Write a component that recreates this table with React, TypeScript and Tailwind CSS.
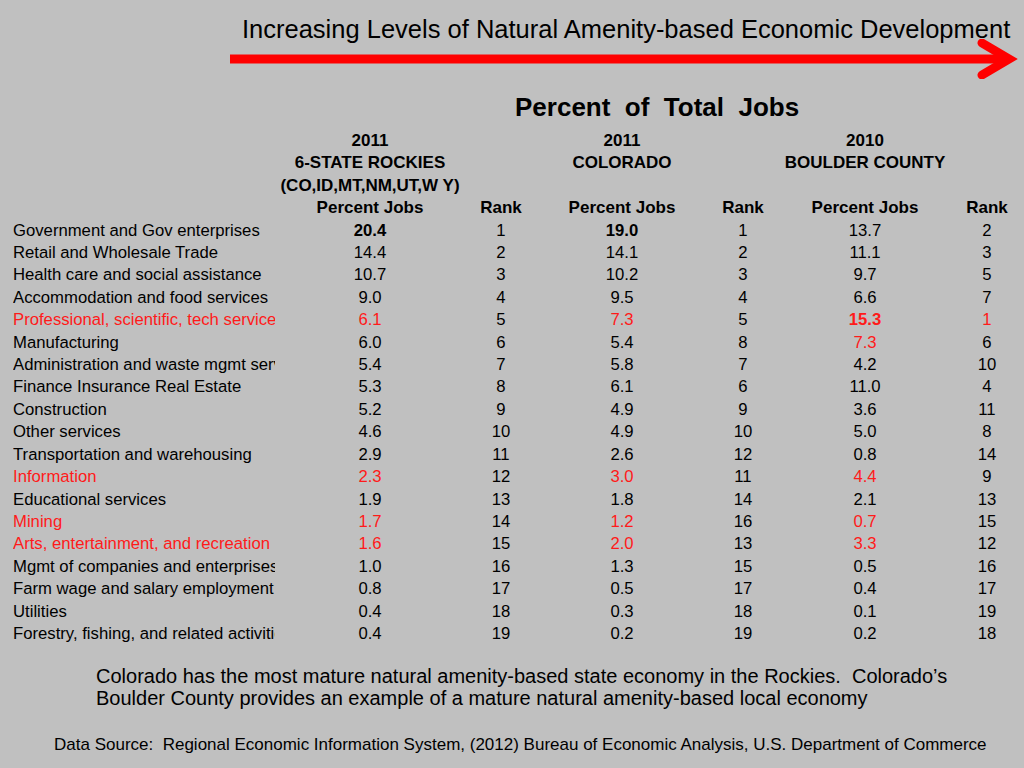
type Row = {
  label: string;
  red?: boolean;
  v: [string, string, string, string, string, string];
  // which cells are red / bold (index 0..5)
  redCells?: number[];
  boldCells?: number[];
};

const rows: Row[] = [
  { label: "Government and Gov enterprises", v: ["20.4", "1", "19.0", "1", "13.7", "2"], boldCells: [0, 2] },
  { label: "Retail and Wholesale Trade", v: ["14.4", "2", "14.1", "2", "11.1", "3"] },
  { label: "Health care and social assistance", v: ["10.7", "3", "10.2", "3", "9.7", "5"] },
  { label: "Accommodation and food services", v: ["9.0", "4", "9.5", "4", "6.6", "7"] },
  { label: "Professional, scientific, tech services", red: true, v: ["6.1", "5", "7.3", "5", "15.3", "1"], redCells: [0, 2, 4, 5], boldCells: [4] },
  { label: "Manufacturing", v: ["6.0", "6", "5.4", "8", "7.3", "6"], redCells: [4] },
  { label: "Administration and waste mgmt services", v: ["5.4", "7", "5.8", "7", "4.2", "10"] },
  { label: "Finance Insurance Real Estate", v: ["5.3", "8", "6.1", "6", "11.0", "4"] },
  { label: "Construction", v: ["5.2", "9", "4.9", "9", "3.6", "11"] },
  { label: "Other services", v: ["4.6", "10", "4.9", "10", "5.0", "8"] },
  { label: "Transportation and warehousing", v: ["2.9", "11", "2.6", "12", "0.8", "14"] },
  { label: "Information", red: true, v: ["2.3", "12", "3.0", "11", "4.4", "9"], redCells: [0, 2, 4] },
  { label: "Educational services", v: ["1.9", "13", "1.8", "14", "2.1", "13"] },
  { label: "Mining", red: true, v: ["1.7", "14", "1.2", "16", "0.7", "15"], redCells: [0, 2, 4] },
  { label: "Arts, entertainment, and recreation", red: true, v: ["1.6", "15", "2.0", "13", "3.3", "12"], redCells: [0, 2, 4] },
  { label: "Mgmt of companies and enterprises", v: ["1.0", "16", "1.3", "15", "0.5", "16"] },
  { label: "Farm wage and salary employment", v: ["0.8", "17", "0.5", "17", "0.4", "17"] },
  { label: "Utilities", v: ["0.4", "18", "0.3", "18", "0.1", "19"] },
  { label: "Forestry, fishing, and related activities", v: ["0.4", "19", "0.2", "19", "0.2", "18"] },
];

const grid = "grid grid-cols-[262px_190px_72px_170px_72px_172px_72px]";

function Arrow() {
  return (
    <svg width="794" height="40" viewBox="0 0 794 40" className="block">
      <line x1="0" y1="20" x2="775" y2="20" stroke="#ff0000" strokeWidth="9" />
      <polyline
        points="752,4 779,20 752,36"
        fill="none"
        stroke="#ff0000"
        strokeWidth="9"
        strokeLinecap="round"
        strokeLinejoin="miter"
      />
    </svg>
  );
}

export default function App() {
  return (
    <div className="w-[1024px] h-[768px] bg-[#c0c0c0] text-black overflow-hidden font-['Liberation_Sans',Arial,sans-serif]">
      {/* header */}
      <div className="pl-[242px] pt-[14px] h-[36px]">
        <span className="text-[25.5px] leading-[30px] whitespace-nowrap">
          Increasing Levels of Natural Amenity-based Economic Development
        </span>
      </div>
      <div className="pl-[230px] pt-[3px]">
        <Arrow />
      </div>

      <div className="pl-[515px] pt-[13px] h-[48px]">
        <span className="text-[26px] leading-[30px] font-bold whitespace-pre">Percent  of  Total  Jobs</span>
      </div>

      {/* table */}
      <div className="pl-[13px] mt-[3px] text-[16.7px]">
        <div className={`${grid} font-bold text-[17px] leading-[22.4px]`}>
          <div />
          <div className="text-center">2011</div>
          <div />
          <div className="text-center">2011</div>
          <div />
          <div className="text-center">2010</div>
          <div />

          <div />
          <div className="text-center">6-STATE ROCKIES</div>
          <div />
          <div className="text-center">COLORADO</div>
          <div />
          <div className="text-center">BOULDER COUNTY</div>
          <div />

          <div />
          <div className="text-center whitespace-pre">(CO,ID,MT,NM,UT,W Y)</div>
          <div />
          <div />
          <div />
          <div />
          <div />

          <div />
          <div className="text-center">Percent Jobs</div>
          <div className="text-center">Rank</div>
          <div className="text-center">Percent Jobs</div>
          <div className="text-center">Rank</div>
          <div className="text-center">Percent Jobs</div>
          <div className="text-center">Rank</div>
        </div>

        {rows.map((r) => (
          <div key={r.label} className={`${grid} leading-[22.4px]`}>
            <div className={`overflow-hidden whitespace-nowrap ${r.red ? "text-[#ff1a1a]" : ""}`}>{r.label}</div>
            {r.v.map((val, i) => (
              <div
                key={i}
                className={`text-center ${r.redCells?.includes(i) ? "text-[#ff1a1a]" : ""} ${
                  r.boldCells?.includes(i) ? "font-bold" : ""
                }`}
              >
                {val}
              </div>
            ))}
          </div>
        ))}
      </div>

      {/* notes */}
      <div className="pl-[96px] pt-[20px] text-[20px] leading-[22px]">
        <div className="whitespace-nowrap">
          Colorado has the most mature natural amenity-based state economy in the Rockies.&nbsp; Colorado’s
        </div>
        <div className="whitespace-nowrap">
          Boulder County provides an example of a mature natural amenity-based local economy
        </div>
      </div>

      <div className="pl-[54px] pt-[26px] text-[17px] leading-[20px]">
        <span className="whitespace-nowrap">
          Data Source:&nbsp; Regional Economic Information System, (2012) Bureau of Economic Analysis, U.S. Department of Commerce
        </span>
      </div>
    </div>
  );
}
